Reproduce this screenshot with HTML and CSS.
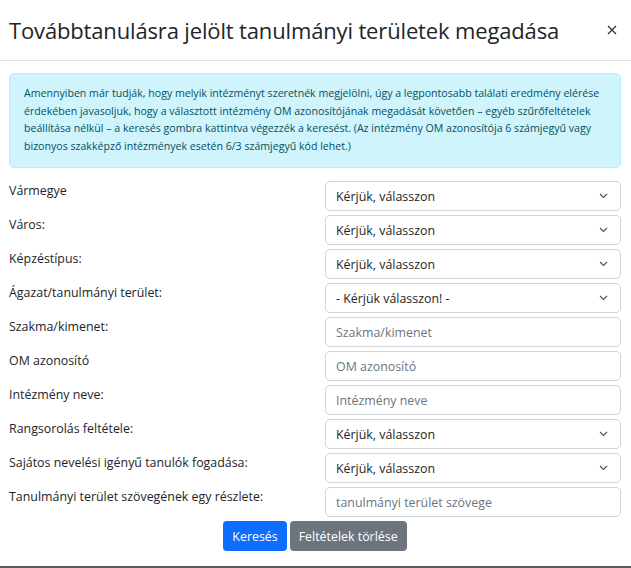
FILE: index.html
```html
<!DOCTYPE html>
<html lang="hu">
<head>
<meta charset="utf-8">
<title>Továbbtanulásra jelölt tanulmányi területek megadása</title>
<link rel="stylesheet" href="styles.css">
</head>
<body>
<div class="modal">
  <div class="modal-header">
    <h5 class="modal-title">Továbbtanulásra jelölt tanulmányi területek megadása</h5>
    <button class="btn-close" type="button" aria-label="Bezárás">
      <svg width="10" height="10" viewBox="0 0 10 10"><path d="M1 1L9 9M9 1L1 9" stroke="#333" stroke-width="1.3" fill="none"/></svg>
    </button>
  </div>
  <div class="modal-body">
    <div class="alert">Amennyiben már tudják, hogy melyik intézményt szeretnék megjelölni, úgy a legpontosabb találati eredmény elérése érdekében javasoljuk, hogy a választott intézmény OM azonosítójának megadását követően – egyéb szűrőfeltételek beállítása nélkül – a keresés gombra kattintva végezzék a keresést. (Az intézmény OM azonosítója 6 számjegyű vagy bizonyos szakképző intézmények esetén 6/3 számjegyű kód lehet.)</div>
    <form class="form">
      <label class="form-label">Vármegye</label>
      <div class="form-select"><span>Kérjük, válasszon</span><svg class="chev" width="9" height="6" viewBox="0 0 9 6"><path d="M1 1l3.5 3.5L8 1" stroke="#555" stroke-width="1.2" fill="none"/></svg></div>

      <label class="form-label">Város:</label>
      <div class="form-select"><span>Kérjük, válasszon</span><svg class="chev" width="9" height="6" viewBox="0 0 9 6"><path d="M1 1l3.5 3.5L8 1" stroke="#555" stroke-width="1.2" fill="none"/></svg></div>

      <label class="form-label">Képzéstípus:</label>
      <div class="form-select"><span>Kérjük, válasszon</span><svg class="chev" width="9" height="6" viewBox="0 0 9 6"><path d="M1 1l3.5 3.5L8 1" stroke="#555" stroke-width="1.2" fill="none"/></svg></div>

      <label class="form-label">Ágazat/tanulmányi terület:</label>
      <div class="form-select"><span>- Kérjük válasszon! -</span><svg class="chev" width="9" height="6" viewBox="0 0 9 6"><path d="M1 1l3.5 3.5L8 1" stroke="#555" stroke-width="1.2" fill="none"/></svg></div>

      <label class="form-label">Szakma/kimenet:</label>
      <input class="form-control" type="text" placeholder="Szakma/kimenet">

      <label class="form-label">OM azonosító</label>
      <input class="form-control" type="text" placeholder="OM azonosító">

      <label class="form-label">Intézmény neve:</label>
      <input class="form-control" type="text" placeholder="Intézmény neve">

      <label class="form-label">Rangsorolás feltétele:</label>
      <div class="form-select"><span>Kérjük, válasszon</span><svg class="chev" width="9" height="6" viewBox="0 0 9 6"><path d="M1 1l3.5 3.5L8 1" stroke="#555" stroke-width="1.2" fill="none"/></svg></div>

      <label class="form-label">Sajátos nevelési igényű tanulók fogadása:</label>
      <div class="form-select"><span>Kérjük, válasszon</span><svg class="chev" width="9" height="6" viewBox="0 0 9 6"><path d="M1 1l3.5 3.5L8 1" stroke="#555" stroke-width="1.2" fill="none"/></svg></div>

      <label class="form-label">Tanulmányi terület szövegének egy részlete:</label>
      <input class="form-control" type="text" placeholder="tanulmányi terület szövege">

      <div class="buttons">
        <button class="btn btn-primary" type="button">Keresés</button>
        <button class="btn btn-secondary" type="button">Feltételek törlése</button>
      </div>
    </form>
  </div>
</div>
</body>
</html>
```
FILE: styles.css
```css
* { box-sizing: border-box; }
html { background: #5b5b5b; }
body {
  margin: 0;
  font-family: "Open Sans", "Noto Sans", sans-serif;
  color: #212529;
}
.modal {
  background: #fff;
  height: 566px;
  overflow: hidden;
}
.modal-header {
  display: flex;
  align-items: center;
  justify-content: space-between;
  height: 61px;
  padding: 0 13px 0 9px;
  border-bottom: 1px solid #dee2e6;
}
.modal-title {
  margin: 0;
  font-size: 22px;
  font-weight: 500;
  color: #212529;
  letter-spacing: -0.15px;
}
.btn-close {
  border: 0;
  background: none;
  padding: 0;
  width: 12px;
  height: 12px;
  display: flex;
  align-items: center;
  justify-content: center;
}
.modal-body {
  padding: 12px 10px 0 9px;
}
.alert {
  background: #cff4fc;
  border: 1px solid #b6effb;
  color: #055160;
  border-radius: 5px;
  padding: 11px 14px 12px 14px;
  font-size: 10.6px;
  line-height: 17.6px;
  margin-bottom: 13px;
}
.form {
  display: grid;
  grid-template-columns: 316px 296px;
  row-gap: 4px;
}
.form-label {
  font-size: 12.4px;
  line-height: 18px;
  padding-top: 1px;
  color: #212529;
}
.form-select, .form-control {
  height: 30px;
  border: 1px solid #ced4da;
  border-radius: 5px;
  font-family: inherit;
  font-size: 12.4px;
  padding: 0 10px;
  background: #fff;
  width: 296px;
}
.form-select {
  display: flex;
  align-items: center;
  justify-content: space-between;
  color: #212529;
  padding-right: 12px;
}
.form-control { color: #212529; }
.form-control::placeholder { color: #6c757d; }
.buttons {
  grid-column: 1 / -1;
  display: flex;
  justify-content: center;
  gap: 3px;
}
.btn {
  height: 30px;
  border: 0;
  border-radius: 4px;
  color: #fff;
  font-family: inherit;
  font-size: 12.4px;
  padding: 0 9px;
}
.btn-primary { background: #0d6efd; }
.btn-secondary { background: #6c757d; }
```
